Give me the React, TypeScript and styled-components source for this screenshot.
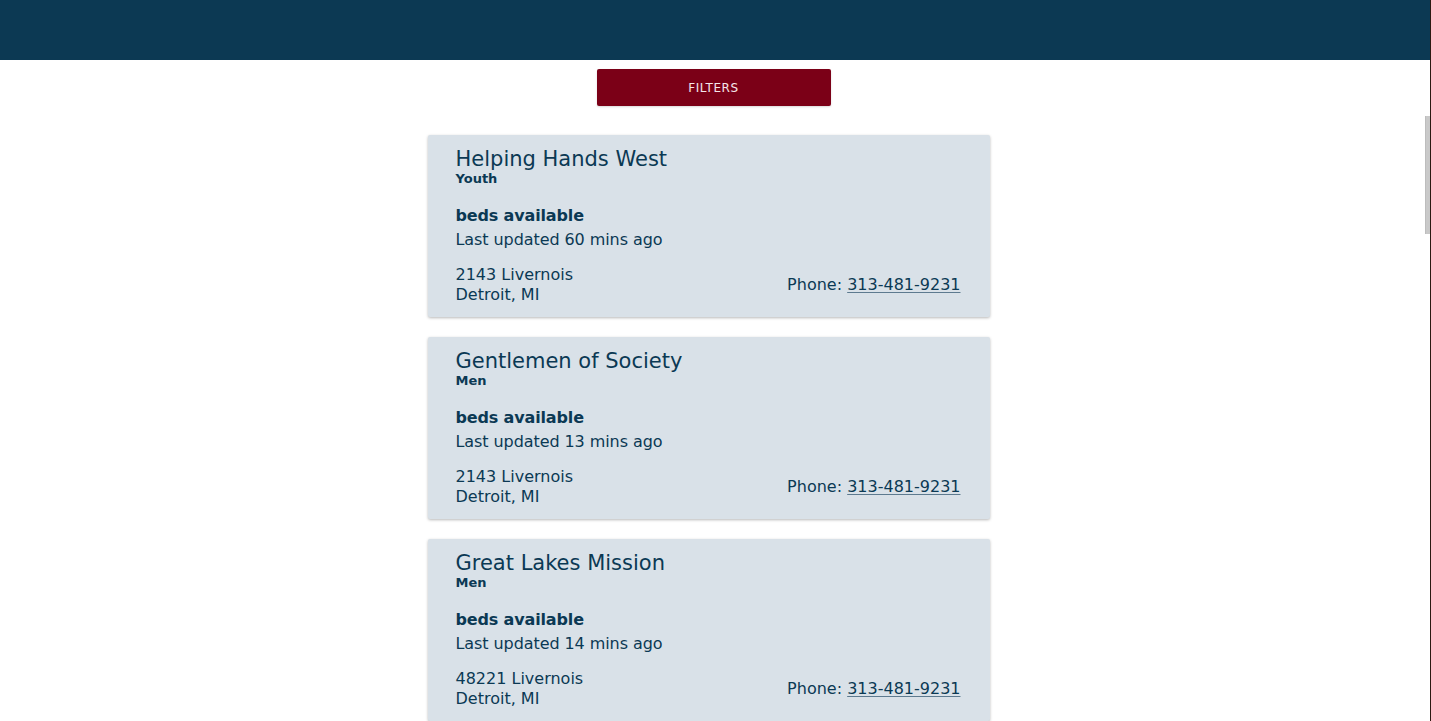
import React from "react";
import styled, { createGlobalStyle } from "styled-components";

const GlobalStyle = createGlobalStyle`
  html, body {
    margin: 0;
    padding: 0;
    overflow: hidden;
    background: #ffffff;
  }
  body {
    font-family: "DejaVu Sans", Verdana, sans-serif;
  }
`;

const Page = styled.div`
  min-height: 100vh;
  border-right: 1px solid #2b1a12;
  background: #ffffff;
  display: flex;
  flex-direction: column;
`;

const ScrollThumb = styled.div`
  position: fixed;
  top: 116px;
  right: 1px;
  width: 4px;
  height: 118px;
  background: #c9c9c9;
  border-left: 1px solid #bdbdbd;
`;

const Header = styled.header`
  height: 60px;
  background: #0c3953;
  flex-shrink: 0;
`;

const FilterBar = styled.div`
  display: flex;
  justify-content: center;
  padding: 9px 3px 0 0;
`;

const FilterButton = styled.button`
  width: 234px;
  height: 37px;
  border: none;
  border-radius: 2px;
  background: #7b0017;
  color: #f5e6ea;
  font-family: "DejaVu Sans", Verdana, sans-serif;
  font-size: 12px;
  letter-spacing: 0.05em;
  cursor: pointer;
  box-shadow: 0 1px 2px rgba(0, 0, 0, 0.15);
`;

const List = styled.main`
  display: flex;
  flex-direction: column;
  align-items: center;
  gap: 20px;
  padding: 29px 13px 40px 0;
`;

const Card = styled.article`
  width: 562px;
  box-sizing: border-box;
  background: #d9e1e8;
  border-radius: 2px;
  padding: 12px 29px 12px 28px;
  color: #0b3954;
  box-shadow: 0 1px 3px rgba(0, 0, 0, 0.28);
`;

const Title = styled.h2`
  margin: 0;
  font-size: 21px;
  font-weight: normal;
  line-height: normal;
`;

const Category = styled.div`
  font-size: 13px;
  font-weight: bold;
  line-height: 15px;
`;

const Beds = styled.div`
  margin-top: 20px;
  font-size: 16px;
  font-weight: bold;
  line-height: normal;
  letter-spacing: -0.15px;
`;

const Updated = styled.div`
  margin-top: 5px;
  font-size: 16px;
  line-height: normal;
  letter-spacing: -0.08px;
`;

const Footer = styled.div`
  margin-top: 16px;
  display: flex;
  justify-content: space-between;
  align-items: center;
  font-size: 16px;
  line-height: 20px;
`;

const Address = styled.div`
  display: flex;
  flex-direction: column;
`;

const Phone = styled.div``;

const PhoneLink = styled.a`
  color: #0b3954;
  text-decoration: underline;
  text-decoration-color: #5d7a8f;
  text-underline-offset: 2px;
`;

type Shelter = {
  name: string;
  category: string;
  updated: number;
  street: string;
  city: string;
  phone: string;
};

const shelters: Shelter[] = [
  { name: "Helping Hands West", category: "Youth", updated: 60, street: "2143 Livernois", city: "Detroit, MI", phone: "313-481-9231" },
  { name: "Gentlemen of Society", category: "Men", updated: 13, street: "2143 Livernois", city: "Detroit, MI", phone: "313-481-9231" },
  { name: "Great Lakes Mission", category: "Men", updated: 14, street: "48221 Livernois", city: "Detroit, MI", phone: "313-481-9231" },
];

export default function App() {
  return (
    <>
      <GlobalStyle />
      <Page>
        <Header />
        <FilterBar>
          <FilterButton>FILTERS</FilterButton>
        </FilterBar>
        <List>
          {shelters.map((s) => (
            <Card key={s.name}>
              <Title>{s.name}</Title>
              <Category>{s.category}</Category>
              <Beds>beds available</Beds>
              <Updated>Last updated {s.updated} mins ago</Updated>
              <Footer>
                <Address>
                  <span>{s.street}</span>
                  <span>{s.city}</span>
                </Address>
                <Phone>
                  Phone: <PhoneLink href="#">{s.phone}</PhoneLink>
                </Phone>
              </Footer>
            </Card>
          ))}
        </List>
      </Page>
      <ScrollThumb />
    </>
  );
}
